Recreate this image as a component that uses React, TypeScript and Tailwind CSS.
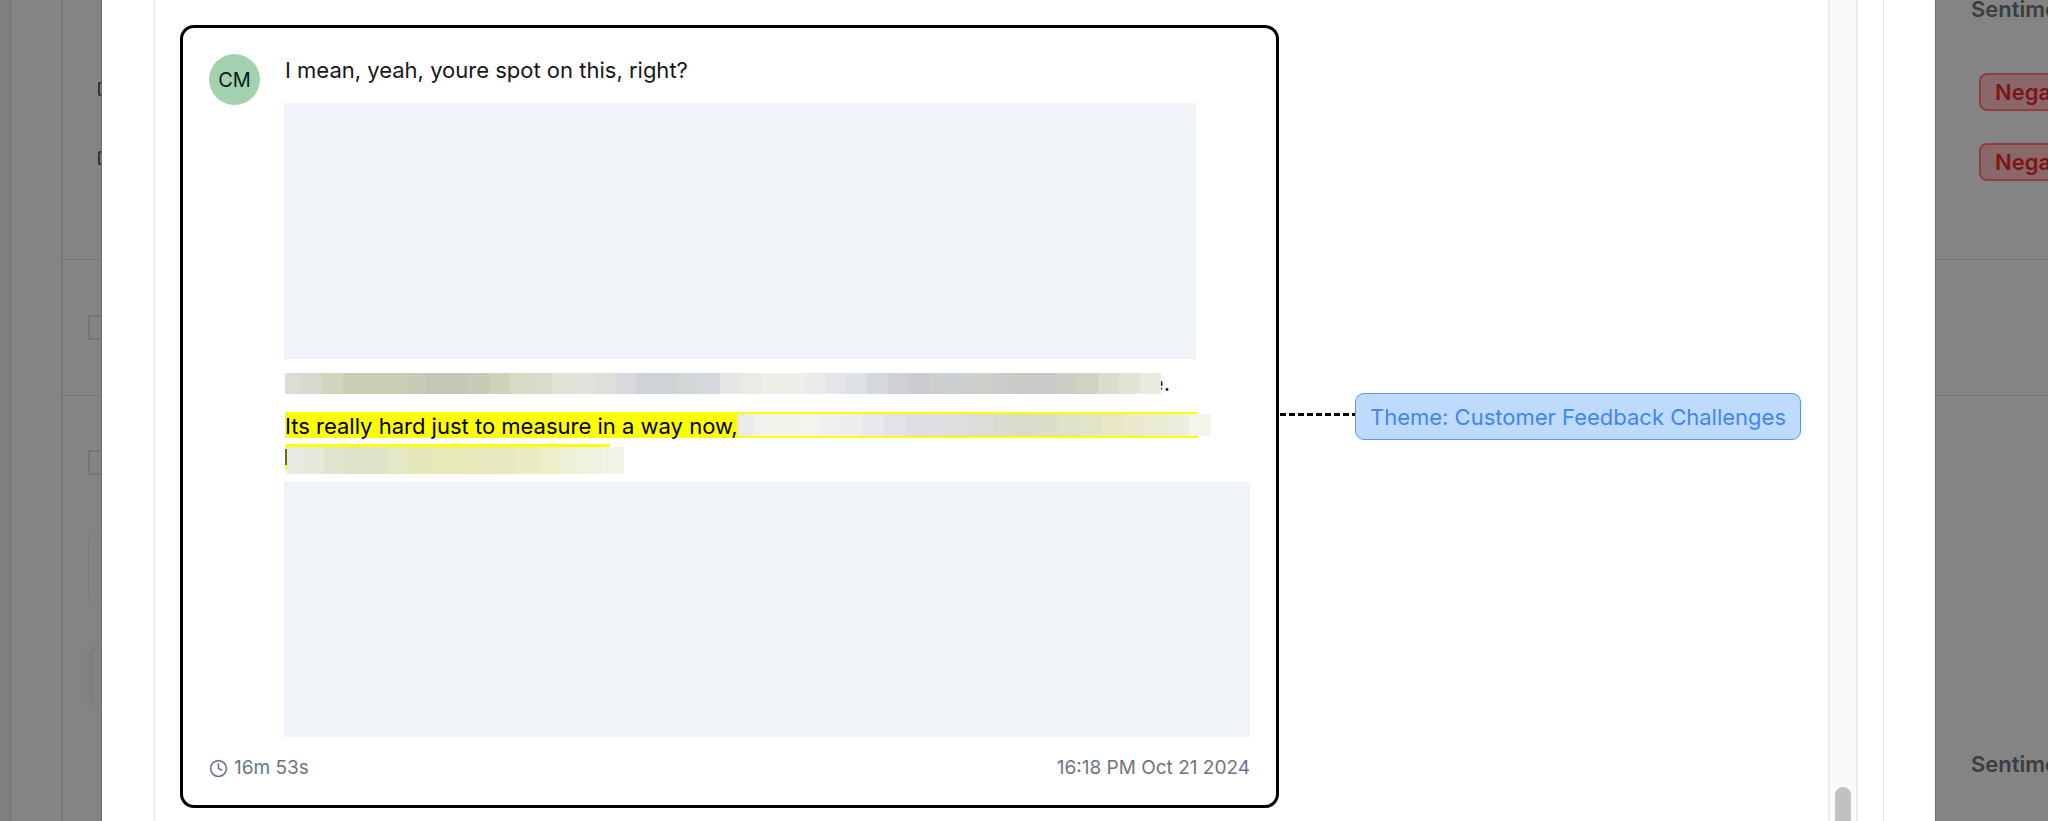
import React from "react";
import { Clock } from "lucide-react";

const LINE_ONE = [
  "#dcddd5", "#d9dacf", "#d2d4be", "#cccdb6", "#cbccb4", "#cccdb7", "#c9cab7", "#c5c6b3", "#c5c6b3", "#c9cab8",
  "#cfd1bb", "#d7dac5", "#dadbca", "#e0e2d5", "#e0e2db", "#dddfdb", "#d8dade", "#d0d3d6", "#d0d3d6", "#d3d6d7",
  "#d4d7dc", "#e4e7e3", "#e9ece5", "#edf0e6", "#edf0e8", "#e9ece9", "#e3e5e8", "#dde0e4", "#d5d8db", "#cfd0d5",
  "#cbccd0", "#cccfd0", "#cccfd1", "#cdcfcb", "#cbccca", "#c8cac6", "#c9cac7", "#cccfc5", "#d1d3c5", "#dbddcd",
  "#e2e4d5", "#e8ebdf",
];

const LINE_TWO = [
  "#eaecec", "#f1f2ec", "#f1f3ea", "#f3f4ec", "#f0f1ee", "#edefee", "#e7e8eb", "#e2e3e7", "#dddee4", "#dedee3",
  "#dedede", "#dcddd8", "#dbdcd0", "#dadccb", "#dcdec8", "#dfe1c8", "#e1e4c8", "#e6e8c6", "#e9eace", "#e9ebd3",
  "#ecedde", "#f3f4ea",
];

const LINE_THREE = [
  "#e9eae3", "#e7e9dd", "#e2e4cf", "#dfe2c9", "#e0e3c8", "#e5e8c4", "#e6e8bb", "#e7e9b7", "#e7e9b8", "#e6e8be",
  "#e7e9c3", "#eaecc3", "#edefcb", "#eff1d8", "#f0f2e0", "#f1f3e6",
];

function Mosaic({ colors, className }: { colors: string[]; className: string }) {
  return (
    <span aria-hidden="true" className={`flex ${className}`}>
      {colors.map((color, i) => (
        <span key={i} className="flex-1 first:flex-[0.7]" style={{ backgroundColor: color }} />
      ))}
    </span>
  );
}

function NegativeBadge() {
  return (
    <span className="flex h-[38px] w-[120px] items-center rounded-lg border-2 border-[#933c3f] bg-[#8a6869] px-3.5 text-[22px] leading-7 font-semibold text-[#7d1518]">
      Negative
    </span>
  );
}

function PageLeft() {
  return (
    <aside aria-label="Page content" className="flex w-[102px] shrink-0 overflow-hidden border-r border-[#6c6c6c] bg-[#848484]">
      <div className="w-[11px] shrink-0 border-r border-[#757575] bg-[#7f7f7f]" />
      <div className="w-[50px] shrink-0" />
      <div className="w-[41px] shrink-0 border-l-2 border-[#7a7a7a]">
        <div className="flex h-[260px] flex-col gap-[55px] border-b border-[#757575] pt-[82px] pl-[35px]">
          <input type="checkbox" aria-label="Select first row" className="size-3.5 appearance-none rounded-xs border-2 border-[#333]" />
          <input type="checkbox" aria-label="Select second row" className="size-3.5 appearance-none rounded-xs border-2 border-[#333]" />
        </div>
        <div className="h-[136px] border-b border-[#757575] pt-[55px] pl-[25px]">
          <div className="size-[25px] border-2 border-[#737876]" />
        </div>
        <div className="flex flex-col pt-[54px] pl-[25px]">
          <div className="size-[25px] border-2 border-[#737876]" />
          <div className="mt-[55px] h-[77px] w-20 rounded-xl border border-[#7a7a7a]" />
          <div className="mt-[38px] ml-1 h-[62px] w-20 rounded-xl border border-[#7d7d7d] shadow-[0_0_6px_#747474]" />
        </div>
      </div>
    </aside>
  );
}

function PageRight() {
  return (
    <aside aria-label="Sentiment column" className="w-[113px] shrink-0 overflow-hidden border-l border-[#6c6c6c] bg-[#848484] text-[22px] leading-7 font-semibold text-[#3b3d40]">
      <div className="flow-root h-[260px] border-b border-[#757575]">
        <div className="-mt-[5px] pl-[35px]">Sentiment</div>
        <div className="mt-[50px] flex flex-col gap-8 pl-[43px]">
          <NegativeBadge />
          <NegativeBadge />
        </div>
      </div>
      <div className="h-[136px] border-b border-[#757575]" />
      <div className="pt-[354px] pl-[35px]">Sentiment</div>
    </aside>
  );
}

function TranscriptCard() {
  return (
    <article className="mt-[25px] flex h-[783px] min-w-0 grow flex-col rounded-[14px] border-[3px] border-black px-[26px] pt-[26px]">
      <div className="flex gap-6">
        <div className="flex size-[51px] shrink-0 items-center justify-center rounded-full bg-[#a3d3ae] text-xl text-[#0c1a20]">CM</div>
        <div className="min-w-0 grow text-[22px] leading-8 text-[#15171c]">
          <p className="pl-px">I mean, yeah, youre spot on this, right?</p>
          <div className="mt-[17px] mr-[54px] h-[256px] bg-[#f0f4f9]" />
          <p className="mt-[7px] ml-px flex h-[34px] items-center">
            <Mosaic colors={LINE_ONE} className="h-[21px] w-[876px]" />
            <span className="flex w-[9px] justify-end overflow-hidden text-[22px]">e.</span>
          </p>
          <p className="mt-3 mr-[52px] ml-px flex h-[26px] items-center bg-[#ff0] text-black">
            <span className="shrink-0 pt-0.5 leading-[26px]">Its really hard just to measure in a way now,</span>
            <Mosaic colors={LINE_TWO} className="-mr-[13px] h-[22px] grow" />
          </p>
          <p className="mt-1.5 ml-px flex h-[26px] w-[324px] bg-[#ff0] pt-[3px]">
            <span aria-hidden="true" className="mt-0.5 h-4 w-0.5 bg-[#6b6b1a]" />
            <Mosaic colors={LINE_THREE} className="-mr-[15px] h-[27px] grow" />
          </p>
          <div className="mt-3 h-[255px] bg-[#f0f4f9]" />
        </div>
      </div>
      <footer className="mt-4 flex items-center justify-between text-[19px] leading-[30px] text-[#6b7488]">
        <span className="flex items-center gap-1.5">
          <Clock className="size-[19px]" strokeWidth={2} aria-hidden="true" />
          16m 53s
        </span>
        <time dateTime="2024-10-21T16:18">16:18 PM Oct 21 2024</time>
      </footer>
    </article>
  );
}

export default function App() {
  return (
    <div className="flex h-screen overflow-hidden bg-[#848484] font-['Inter','Liberation_Sans',sans-serif]">
      <PageLeft />
      <main className="min-w-0 grow bg-white pr-[51px] pl-[52px]">
        <div className="flex h-full border-x border-[#e3e5e7] px-[25px]">
          <section className="flex min-w-0 grow items-start pr-[27px]">
            <TranscriptCard />
            <div className="mt-[393px] flex shrink-0 items-center">
              <svg width="76" height="3" aria-hidden="true" className="-mt-1">
                <path d="M1 1.5H76" stroke="#000" strokeWidth="3" strokeDasharray="6 3" />
              </svg>
              <button type="button" className="h-[47px] rounded-[9px] border border-[#5b95f2] bg-[#bedbfe] px-3.5 text-[22px] leading-8 text-[#4385f0]">
                Theme: Customer Feedback Challenges
              </button>
            </div>
          </section>
          <div aria-hidden="true" className="flex w-[30px] shrink-0 items-end justify-center border-x-2 border-[#ebebeb] bg-[#fafafa]">
            <div className="h-[34px] w-4 rounded-t-full bg-[#c1c1c1]" />
          </div>
        </div>
      </main>
      <PageRight />
    </div>
  );
}
